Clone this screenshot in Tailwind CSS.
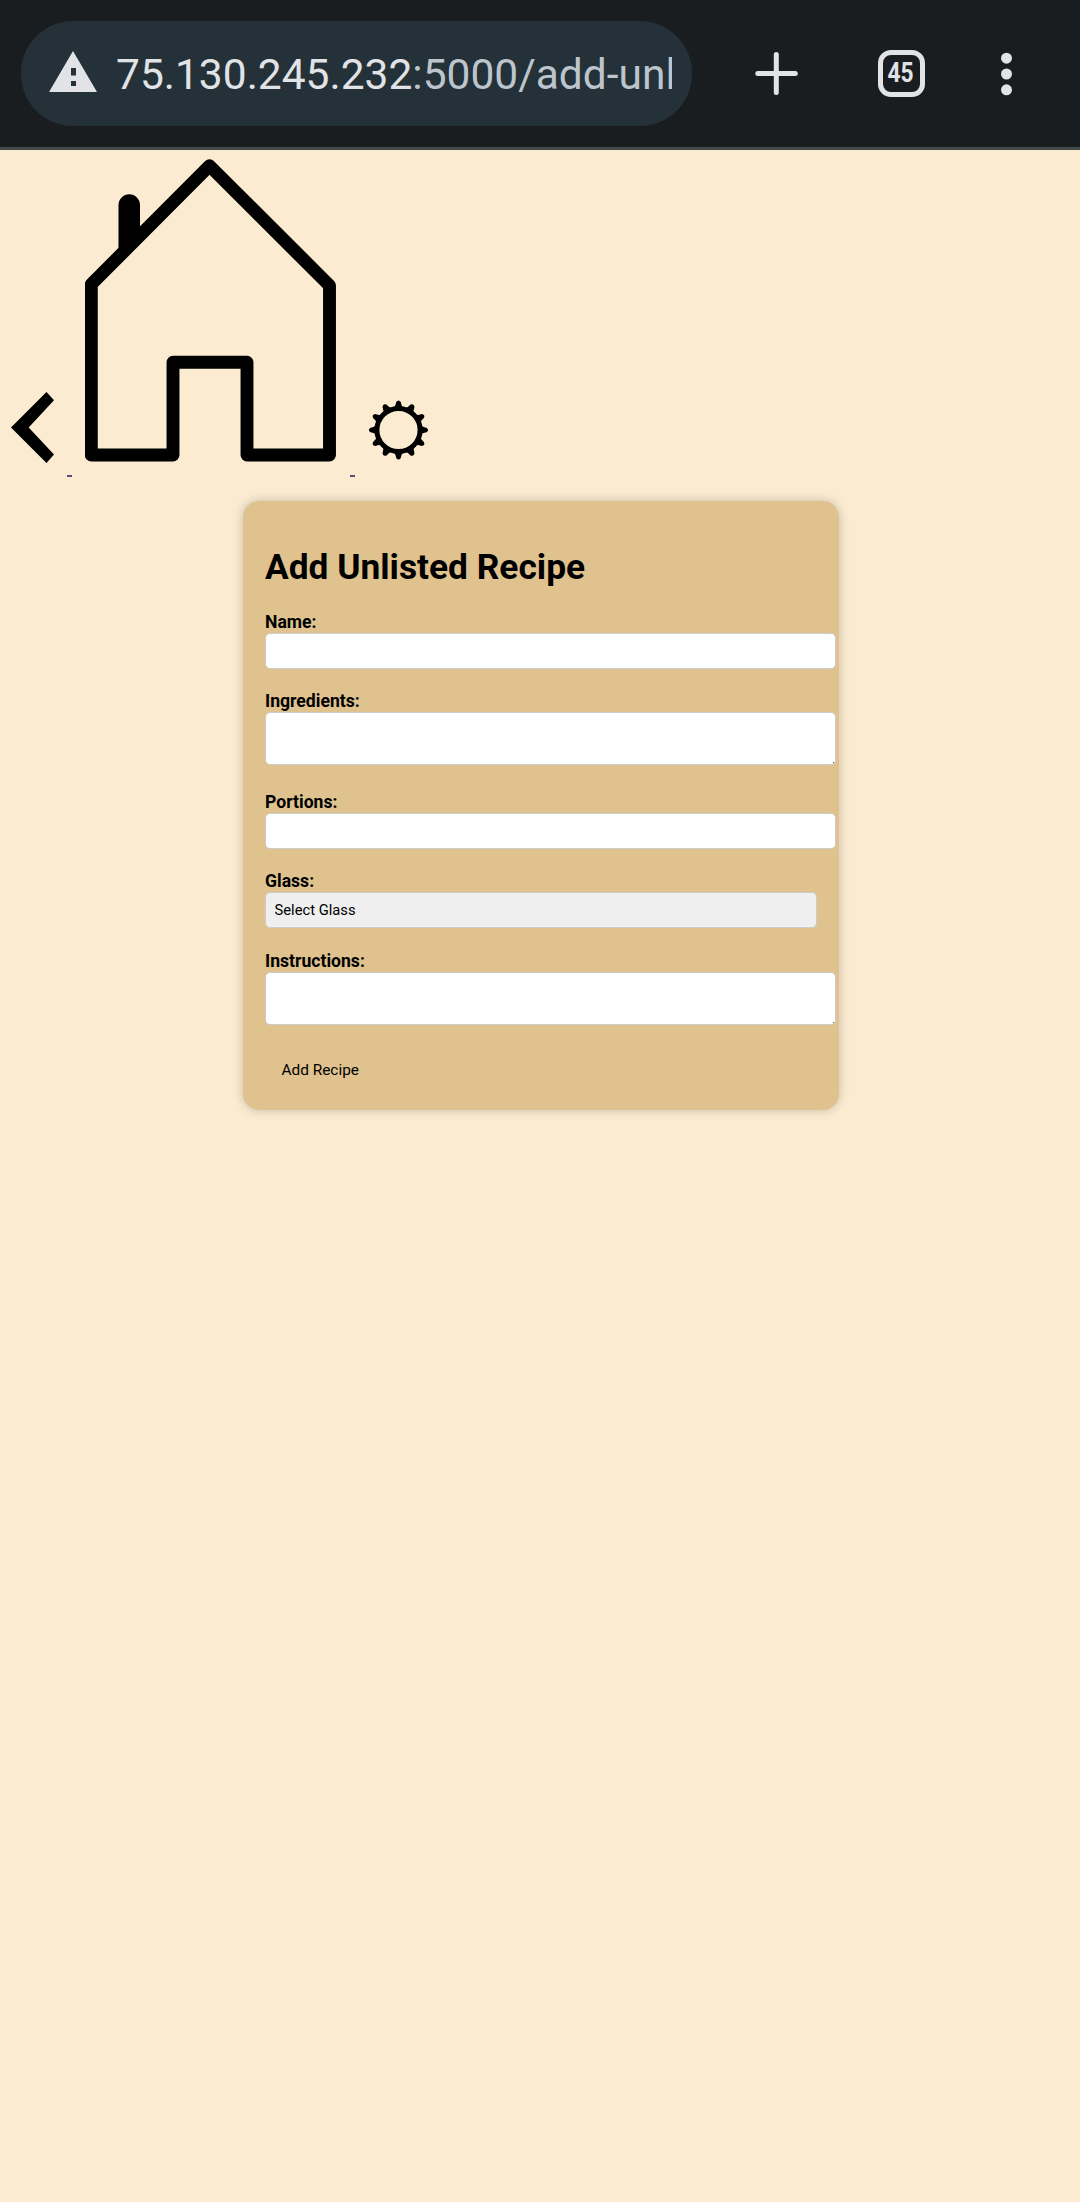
<!DOCTYPE html>
<html lang="en">
<head>
<meta charset="utf-8">
<title>Add Unlisted Recipe</title>
<script src="https://cdn.jsdelivr.net/npm/@tailwindcss/browser@4"></script>
</head>
<body class="min-h-[2202px] bg-[#faebd1] font-[Roboto,sans-serif] text-black">
<header class="flex h-[150px] items-start border-b-[3px] border-[#44494c] bg-[#1a1d1f] pl-[21px] pt-[21px]">
  <div class="flex h-[105px] w-[671px] shrink-0 items-center rounded-[52px] bg-[#243138] pl-7 pr-5">
    <svg class="mb-[5px] h-[41px] w-12 shrink-0" viewBox="0 0 48 41"><path fill="#e1e3e6" fill-rule="evenodd" d="M24 0 48 41H0ZM22 17v7.500h5V17Zm0 13v5h5v-5Z"/></svg>
    <div class="ml-[19px] mt-[3px] w-[556px] shrink-0 overflow-hidden whitespace-nowrap text-[42.5px] leading-[60px] text-[#bcc5cd]"><span class="text-[#e1e3e6]">75.130.245.232</span>:5000/add-unlisted</div>
  </div>
  <div class="ml-[63px] mt-[29px] flex items-center">
    <svg class="size-[43px]" viewBox="0 0 43 43" stroke="#e1e3e6" stroke-width="5" stroke-linecap="round"><path d="M21.300 2.500v38M2.800 21.500h37.500"/></svg>
    <div class="ml-[80px] flex size-[47px] items-center justify-center rounded-[13px] border-[5px] border-[#e1e3e6] text-[27px] font-bold leading-none text-[#e1e3e6]"><span class="inline-block scale-x-[.84] -translate-x-px">45</span></div>
    <svg class="ml-[75px] h-[44px] w-3" viewBox="0 0 12 44" fill="#e1e3e6"><circle cx="6.500" cy="6.200" r="5.500"/><circle cx="6.500" cy="22" r="5.500"/><circle cx="6.500" cy="37.800" r="5.500"/></svg>
  </div>
</header>
<nav class="flex h-[327px] items-end pl-[11px]">
  <a class="flex items-end">
    <svg class="mb-[14px] h-[71px] w-[43px]" viewBox="0 0 43 71"><path d="M35.500 0 43 8.300 17.700 35.500 43 62.500 35.500 71 0 35.500Z"/></svg>
    <span class="ml-[13px] h-0.5 w-[5px] bg-[#694679]"></span>
  </a>
  <a class="ml-[13px] flex items-end">
    <svg class="mb-[15px] h-[303px] w-[252px]" viewBox="85 159 252 303" fill="none" stroke="#000" stroke-linejoin="round" stroke-linecap="round"><path stroke-width="12.900" d="M209.500 165.700 91.300 284.300V455H173V362.300h74V455h82.500V285.500Z"/><path fill="#000" stroke="none" d="M118.500 262V205a10.750 10.750 0 0 1 21.500 0v35Z"/></svg>
    <span class="ml-[13px] h-0.5 w-[5px] bg-[#694679]"></span>
  </a>
  <svg class="mb-[17px] ml-[13px] h-[60px] w-[61px]" viewBox="-30.500 -30 61 60">
    <defs><path id="tooth" d="M-5.200-22Q-3-23.500-2.300-28Q0-31.200 2.300-28Q3-23.500 5.200-22Z"/></defs>
    <circle r="21.600" fill="none" stroke="#000" stroke-width="5"/>
    <use href="#tooth"/><use href="#tooth" transform="rotate(30)"/><use href="#tooth" transform="rotate(60)"/><use href="#tooth" transform="rotate(90)"/><use href="#tooth" transform="rotate(120)"/><use href="#tooth" transform="rotate(150)"/><use href="#tooth" transform="rotate(180)"/><use href="#tooth" transform="rotate(210)"/><use href="#tooth" transform="rotate(240)"/><use href="#tooth" transform="rotate(270)"/><use href="#tooth" transform="rotate(300)"/><use href="#tooth" transform="rotate(330)"/>
  </svg>
</nav>
<main class="ml-[243px] mt-6 h-[609px] w-[596px] rounded-[16px] bg-[#dfc28e] pl-[22px] pt-[45px] shadow-[0_0_11px_rgba(0,0,0,0.2)]">
  <h1 class="text-[35.3px] font-bold leading-[42px]">Add Unlisted Recipe</h1>
  <form class="mt-[23px] text-[17.6px]">
    <label class="block h-[22px] font-bold leading-[22px]" for="name">Name:</label>
    <input id="name" class="block h-9 w-[571px] rounded-[5px] border border-[#ccc] bg-white">
    <label class="mt-[21px] block h-[22px] font-bold leading-[22px]" for="ing">Ingredients:</label>
    <div class="relative w-[571px]">
      <textarea id="ing" class="block h-[53px] w-full resize-none rounded-[5px] border border-[#ccc] bg-white"></textarea>
      <span class="absolute bottom-0.5 right-0.5 size-px bg-[#555]"></span>
    </div>
    <label class="mt-[26px] block h-[22px] font-bold leading-[22px]" for="por">Portions:</label>
    <input id="por" class="block h-9 w-[571px] rounded-[5px] border border-[#ccc] bg-white">
    <label class="mt-[21px] block h-[22px] font-bold leading-[22px]" for="glass">Glass:</label>
    <select id="glass" class="block h-9 w-[552px] appearance-none rounded-[5px] border border-[#ccc] bg-[#efefef] pl-[8.500px] text-[14.75px] leading-[34px]"><option>Select Glass</option></select>
    <label class="mt-[22px] block h-[22px] font-bold leading-[22px]" for="ins">Instructions:</label>
    <div class="relative w-[571px]">
      <textarea id="ins" class="block h-[53px] w-full resize-none rounded-[5px] border border-[#ccc] bg-white"></textarea>
      <span class="absolute bottom-0.5 right-0.5 size-px bg-[#555]"></span>
    </div>
    <button type="button" class="mt-[27px] block h-[37px] pl-[16.500px] text-[15.4px]">Add Recipe</button>
  </form>
</main>
</body>
</html>
